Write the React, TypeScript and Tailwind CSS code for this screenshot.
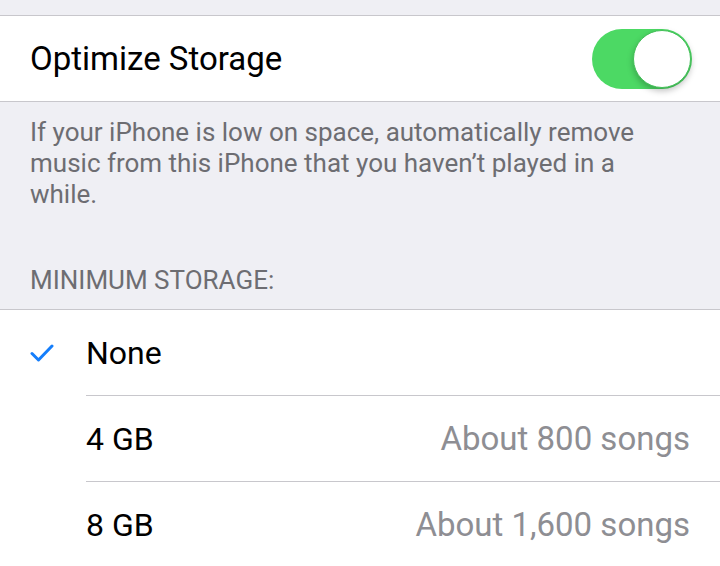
const font = { fontFamily: "Roboto, 'Liberation Sans', sans-serif" };

const Check = () => (
  <svg width="24" height="18" viewBox="0 0 24 18" fill="none">
    <path d="M2 9.5 L8.5 16 L22 2" stroke="#157efb" strokeWidth="3" strokeLinecap="round" strokeLinejoin="round" />
  </svg>
);

const Option = ({ label, detail, checked, last }: { label: string; detail?: string; checked?: boolean; last?: boolean }) => (
  <div className="flex h-[86px] items-stretch">
    <div className="flex w-[86px] shrink-0 items-center pl-[30px]">{checked && <Check />}</div>
    <div className={`flex flex-1 items-center justify-between pr-[30px] ${last ? "" : "border-b border-[#c8c7cc]"}`}>
      <span className="text-[32px] text-black">{label}</span>
      {detail && <span className="text-[33px] text-[#8e8e93]">{detail}</span>}
    </div>
  </div>
);

export default function App() {
  return (
    <div className="h-[566px] w-[720px] overflow-hidden bg-[#efeff4]" style={font}>
      <div className="h-[16px] border-b border-[#c8c7cc]" />
      <div className="flex h-[86px] items-center justify-between border-b border-[#c8c7cc] bg-white pl-[30px] pr-[28px]">
        <span className="text-[33px] text-black">Optimize Storage</span>
        <div className="relative h-[60px] w-[100px] rounded-full bg-[#4cd964]">
          <div className="absolute right-[1px] top-[1px] h-[58px] w-[58px] rounded-full border border-[#43c058] bg-white shadow-[0_3px_6px_rgba(0,0,0,0.25)]" />
        </div>
      </div>
      <div className="h-[207px] px-[30px] pt-[15px] text-[26px] leading-[31px] text-[#6d6d72]">
        <p className="w-[615px]">If your iPhone is low on space, automatically remove music from this iPhone that you haven’t played in a while.</p>
        <p className="mt-[55px] uppercase">Minimum Storage:</p>
      </div>
      <div className="border-t border-[#c8c7cc] bg-white">
        <Option label="None" checked />
        <Option label="4 GB" detail="About 800 songs" />
        <Option label="8 GB" detail="About 1,600 songs" last />
      </div>
    </div>
  );
}
